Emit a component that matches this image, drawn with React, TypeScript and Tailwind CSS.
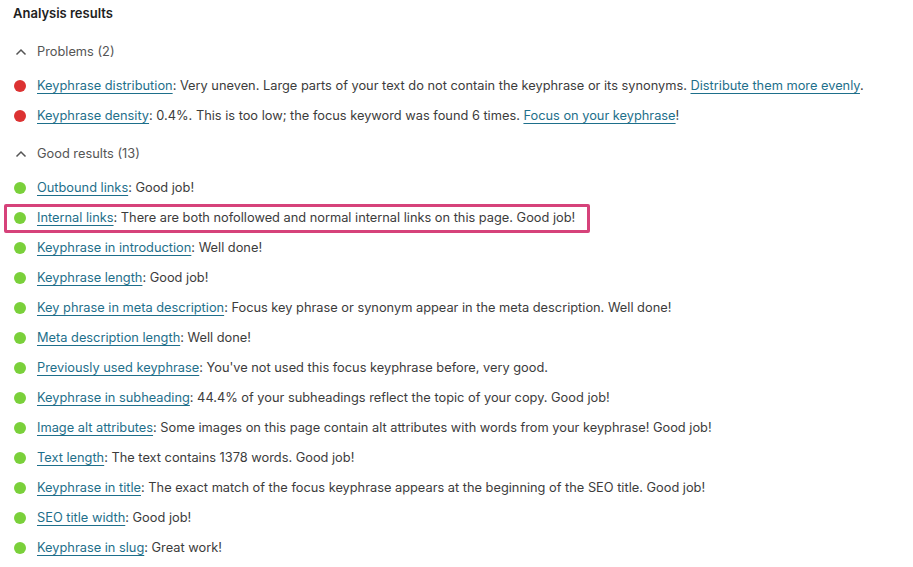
import React from "react";

type Item = { link: string; text: React.ReactNode; ok: boolean; highlight?: boolean };

const A = ({ children }: { children: React.ReactNode }) => (
  <a className="text-[#1e6f8b] underline underline-offset-[3px] decoration-[1px]">{children}</a>
);

const problems: Item[] = [
  {
    link: "Keyphrase distribution",
    ok: false,
    text: (
      <>
        : Very uneven. Large parts of your text do not contain the keyphrase or its synonyms.{" "}
        <A>Distribute them more evenly</A>.
      </>
    ),
  },
  {
    link: "Keyphrase density",
    ok: false,
    text: (
      <>
        : 0.4%. This is too low; the focus keyword was found 6 times. <A>Focus on your keyphrase</A>!
      </>
    ),
  },
];

const good: Item[] = [
  { link: "Outbound links", ok: true, text: ": Good job!" },
  {
    link: "Internal links",
    ok: true,
    highlight: true,
    text: ": There are both nofollowed and normal internal links on this page. Good job!",
  },
  { link: "Keyphrase in introduction", ok: true, text: ": Well done!" },
  { link: "Keyphrase length", ok: true, text: ": Good job!" },
  {
    link: "Key phrase in meta description",
    ok: true,
    text: ": Focus key phrase or synonym appear in the meta description. Well done!",
  },
  { link: "Meta description length", ok: true, text: ": Well done!" },
  { link: "Previously used keyphrase", ok: true, text: ": You've not used this focus keyphrase before, very good." },
  {
    link: "Keyphrase in subheading",
    ok: true,
    text: ": 44.4% of your subheadings reflect the topic of your copy. Good job!",
  },
  {
    link: "Image alt attributes",
    ok: true,
    text: ": Some images on this page contain alt attributes with words from your keyphrase! Good job!",
  },
  { link: "Text length", ok: true, text: ": The text contains 1378 words. Good job!" },
  {
    link: "Keyphrase in title",
    ok: true,
    text: ": The exact match of the focus keyphrase appears at the beginning of the SEO title. Good job!",
  },
  { link: "SEO title width", ok: true, text: ": Good job!" },
  { link: "Keyphrase in slug", ok: true, text: ": Great work!" },
];

function Chevron() {
  return (
    <svg width="12" height="8" viewBox="0 0 12 8" className="text-[#555]">
      <polyline points="1.5,6.5 6,2 10.5,6.5" fill="none" stroke="currentColor" strokeWidth="1.5" />
    </svg>
  );
}

function Row({ item }: { item: Item }) {
  return (
    <li className="relative flex items-center h-[30px]">
      {item.highlight && (
        <span className="absolute left-[-9px] top-[1px] w-[586px] h-[29px] border-[3px] border-[#d6427a] rounded-[2px]" />
      )}
      <span
        className={`w-[12px] h-[12px] rounded-full ml-px mr-[11px] shrink-0 ${item.ok ? "bg-[#7ad03a]" : "bg-[#dc3232]"}`}
      />
      <span>
        <A>{item.link}</A>
        {item.text}
      </span>
    </li>
  );
}

function Section({ title, items }: { title: string; items: Item[] }) {
  return (
    <div>
      <div className="flex items-center h-[30px] text-[#555]">
        <span className="ml-[2px] mr-[10px]">
          <Chevron />
        </span>
        {title}
      </div>
      <ul className="mt-[4px]">
        {items.map((it) => (
          <Row key={it.link} item={it} />
        ))}
      </ul>
    </div>
  );
}

export default function App() {
  return (
    <div
      className="w-[913px] h-[567px] bg-white px-[13px] pt-[4px] text-[12.8px] text-[#3c3c3c] overflow-hidden"
      style={{ fontFamily: "Inter, 'Noto Sans', sans-serif" }}
    >
      <h2 className="font-semibold text-[13px] text-[#1e1e1e] h-[18px] leading-[18px]">Analysis results</h2>
      <div className="mt-[15px]">
        <Section title="Problems (2)" items={problems} />
      </div>
      <div className="mt-[8px]">
        <Section title="Good results (13)" items={good} />
      </div>
    </div>
  );
}
